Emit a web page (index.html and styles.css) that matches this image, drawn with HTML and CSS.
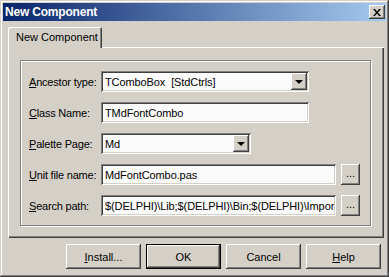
FILE: index.html
```html
<!DOCTYPE html>
<html lang="en">

<head>
    <meta charset="UTF-8">
    <title>New Component</title>
    <link rel="stylesheet" href="styles.css">
</head>

<body>

    <!-- dialog window -->
    <div class="window">
        <div class="titlebar">
            <span class="title">New Component</span>
            <div class="closeBtn">
                <svg width="8" height="7" viewBox="0 0 8 7">
                    <path d="M0 0h2l2 2.5l2-2.5h2l-3 3.5l3 3.5h-2l-2-2.5l-2 2.5h-2l3-3.5z" fill="#000" />
                </svg>
            </div>
        </div>

        <div class="content">
            <div class="tabs">
                <div class="tab">New Component</div>
            </div>

            <div class="panel">
                <div class="group">
                    <div class="row">
                        <label class="caption"><u>A</u>ncestor type:</label>
                        <div class="field combo w208">
                            <span class="value">TComboBox&nbsp; [StdCtrls]</span>
                            <span class="drop"><i></i></span>
                        </div>
                    </div>
                    <div class="row">
                        <label class="caption"><u>C</u>lass Name:</label>
                        <div class="field w208"><span class="value">TMdFontCombo</span></div>
                    </div>
                    <div class="row">
                        <label class="caption"><u>P</u>alette Page:</label>
                        <div class="field combo w150">
                            <span class="value">Md</span>
                            <span class="drop"><i></i></span>
                        </div>
                    </div>
                    <div class="row">
                        <label class="caption"><u>U</u>nit file name:</label>
                        <div class="field w235"><span class="value">MdFontCombo.pas</span></div>
                        <div class="btn dots">...</div>
                    </div>
                    <div class="row">
                        <label class="caption"><u>S</u>earch path:</label>
                        <div class="field w235"><span class="value">$(DELPHI)\Lib;$(DELPHI)\Bin;$(DELPHI)\Impor</span></div>
                        <div class="btn dots">...</div>
                    </div>
                </div>
            </div>

            <div class="buttons">
                <div class="btn push"><u>I</u>nstall...</div>
                <div class="btn push default">OK</div>
                <div class="btn push">Cancel</div>
                <div class="btn push"><u>H</u>elp</div>
            </div>
        </div>
    </div>

</body>

</html>
```

FILE: styles.css
```css
* {
    box-sizing: border-box;
}

body {
    margin: 0;
    background: #d4d0c8;
    font-family: "Liberation Sans", Arial, sans-serif;
    font-size: 11px;
    color: #000;
}

/* window frame */
.window {
    width: 389px;
    height: 277px;
    padding: 3px;
    background: #d4d0c8;
    box-shadow: inset -1px -1px #404040, inset 1px 1px #d4d0c8,
        inset -2px -2px #808080, inset 2px 2px #fff;
}

.titlebar {
    height: 18px;
    display: flex;
    align-items: center;
    justify-content: space-between;
    padding: 0 1px 0 2px;
    background: linear-gradient(to right, #0a246a, #a6caf0);
}

.title {
    color: #fff;
    font-weight: bold;
    font-size: 12px;
    letter-spacing: -0.2px;
}

.closeBtn {
    width: 16px;
    height: 14px;
    display: flex;
    align-items: center;
    justify-content: center;
    background: #d4d0c8;
    box-shadow: inset -1px -1px #404040, inset 1px 1px #fff,
        inset -2px -2px #808080;
}

/* tab page */
.content {
    padding: 6px 2px 0 5px;
}

.tabs {
    display: flex;
    height: 20px;
    position: relative;
    z-index: 1;
}

.tab {
    width: 94px;
    height: 21px;
    padding: 4px 0 0 8px;
    background: #d4d0c8;
    border-radius: 2px 2px 0 0;
    box-shadow: inset 1px 1px #fff, inset -1px 0 #404040, inset -2px 0 #808080;
}

.panel {
    height: 191px;
    padding: 13px 13px 0 12px;
    box-shadow: inset 1px 1px #fff, inset -1px -1px #404040, inset -2px -2px #808080;
}

.group {
    height: 166px;
    padding: 10px 0 0 8px;
    border: 1px solid #808080;
    box-shadow: inset 1px 1px #fff, 1px 1px #fff;
    display: flex;
    flex-direction: column;
    gap: 10px;
}

.row {
    display: flex;
    align-items: center;
    height: 21px;
}

.caption {
    width: 72px;
    flex-shrink: 0;
    letter-spacing: -0.2px;
}

/* sunken edit boxes */
.field {
    height: 21px;
    padding: 0 2px 0 4px;
    display: flex;
    align-items: center;
    background: #fbfbfb;
    overflow: hidden;
    white-space: nowrap;
    box-shadow: inset 1px 1px #808080, inset -1px -1px #fff,
        inset 2px 2px #404040, inset -2px -2px #d4d0c8;
    letter-spacing: -0.1px;
}

.field .value {
    flex: 1;
    overflow: hidden;
}

.w208 {
    width: 208px;
}

.w150 {
    width: 150px;
}

.w235 {
    width: 235px;
}

.combo .drop {
    width: 16px;
    height: 17px;
    flex-shrink: 0;
    display: flex;
    align-items: center;
    justify-content: center;
    background: #d4d0c8;
    box-shadow: inset -1px -1px #404040, inset 1px 1px #fff,
        inset -2px -2px #808080;
}

.combo .drop i {
    width: 0;
    height: 0;
    border-left: 4px solid transparent;
    border-right: 4px solid transparent;
    border-top: 4px solid #000;
}

/* raised buttons */
.btn {
    display: flex;
    align-items: center;
    justify-content: center;
    background: #d4d0c8;
    box-shadow: inset -1px -1px #404040, inset 1px 1px #fff,
        inset -2px -2px #808080;
}

.dots {
    width: 19px;
    height: 21px;
    margin-left: 5px;
    padding-bottom: 3px;
}

.buttons {
    display: flex;
    justify-content: flex-end;
    gap: 5px;
    margin-top: 6px;
    padding-right: 3px;
}

.push {
    width: 75px;
    height: 25px;
}

.push.default {
    box-shadow: inset 0 0 0 1px #000, inset -2px -2px #404040,
        inset 2px 2px #fff, inset -3px -3px #808080;
}
```
